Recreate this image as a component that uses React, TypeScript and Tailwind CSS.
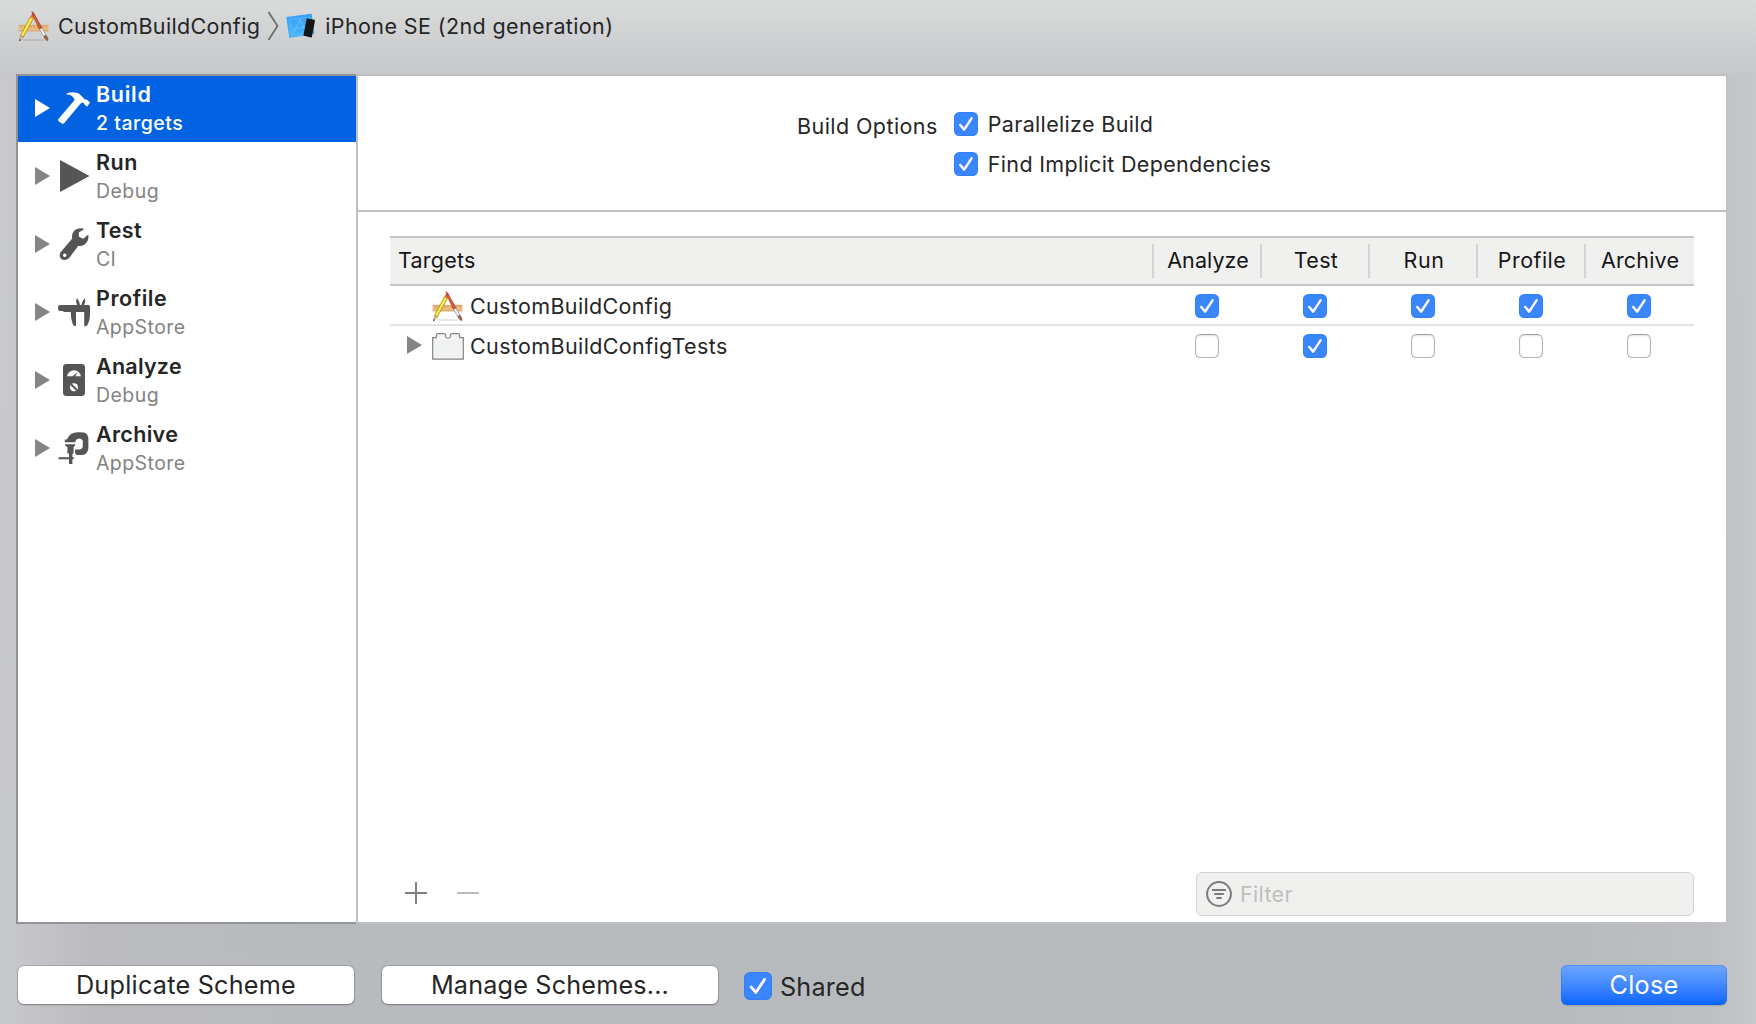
import type { ReactNode } from 'react'

function Disclosure({ className }: { className: string }) {
  return (
    <svg viewBox="0 0 15 18" className={`h-[18px] w-[15px] shrink-0 ${className}`} fill="currentColor">
      <path d="M0 0L15 9L0 18Z" />
    </svg>
  )
}

function Checkbox({ checked, large = false }: { checked: boolean; large?: boolean }) {
  const size = large ? 'size-7 rounded-[6px]' : 'size-6 rounded-[5.5px]'
  if (!checked) {
    return <span className={`block shrink-0 border border-[#b4b4b4] border-t-[#9f9f9f] bg-white shadow-[inset_0_1px_2px_rgba(0,0,0,0.12)] ${size}`} />
  }
  return (
    <span className={`block shrink-0 bg-[#3a87fd] shadow-[inset_0_0_0_1px_rgba(38,112,235,0.35)] ${size}`}>
      <svg viewBox="0 0 24 24" className="size-full" fill="none" strokeLinecap="round" strokeLinejoin="round" strokeWidth="2.5">
        <path d="M6.2 14L10.2 18.6L17.6 7.4" stroke="#2467cf" strokeOpacity=".45" />
        <path d="M6.2 13L10.2 17.6L17.6 6.4" stroke="#fff" />
      </svg>
    </span>
  )
}

function AppIcon() {
  return (
    <svg viewBox="0 0 31 31" className="size-[31px] shrink-0">
      <ellipse cx="16" cy="29" rx="12" ry="1" fill="#000" opacity=".1" />
      <path d="M.6 14H30.4V20.2H.6Z" fill="#ecbb84" />
      <path d="M.6 14.3H30.4M.6 19.9H30.4" stroke="#d39a62" strokeWidth=".7" />
      <path d="M4 15v2M7 15v2M10 15v2M13 15v2M16 15v2M19 15v2M25 15v2M28 15v2" stroke="#b98350" strokeWidth=".6" />
      <path d="M12.2 6L15.4 7.6L5.4 26L2.6 24.4Z" fill="#f2dd22" stroke="#8f7a25" strokeWidth=".6" />
      <path d="M13.4 7.2L3.9 25" stroke="#fff772" strokeWidth=".9" />
      <path d="M12.2 6L13.2 3.9C14.2 2.6 16.8 3.8 16.4 5.6L15.4 7.6Z" fill="#e9744a" />
      <path d="M2.6 24.4L5.4 26L1.4 30Z" fill="#edc48f" stroke="#705035" strokeWidth=".4" />
      <path d="M1.8 28.2L1.2 30.3L3 29Z" fill="#2c2a28" />
      <path d="M14 .4L15.8 2.2L24 17L21.6 18.4L14.8 4.4Z" fill="#c9431d" stroke="#8a3019" strokeWidth=".5" />
      <path d="M15.8 4.6L22.4 17" stroke="#f07a45" strokeWidth=".8" />
      <path d="M21.6 18.4L24 17L28 24.2L25.8 25.5Z" fill="#efeff1" stroke="#808085" strokeWidth=".6" />
      <path d="M25.8 25.5L28 24.2C29.6 26.2 30.2 27.8 29.9 29.6C28.1 29.3 26.6 27.6 25.8 25.5Z" fill="#a5643e" stroke="#69442f" strokeWidth=".5" />
    </svg>
  )
}

function SimulatorIcon() {
  return (
    <svg viewBox="0 0 30 26" className="h-[26px] w-[30px] shrink-0">
      <defs>
        <linearGradient id="paper" x1="0" y1="0" x2="0" y2="1">
          <stop offset="0" stopColor="#35a0f7" />
          <stop offset="1" stopColor="#49b4fb" />
        </linearGradient>
      </defs>
      <path d="M.3 4L25.6 .8L28.6 21L3.2 25Z" fill="url(#paper)" />
      <path d="M3.5 6.5L23.6 4L25 19.5L6 22.3Z" fill="none" stroke="#8ad0ff" strokeWidth=".5" opacity=".7" />
      <path d="M14.6 5.6L7.2 20.4M12.8 6L20 18M6.5 16L20 14.2" stroke="#8ad0ff" strokeWidth=".7" opacity=".8" />
      <path d="M21.5 5.4L28.4 6.8Q29.2 7 29 7.8L25.9 23.8Q25.7 24.6 25 24.4L18 22.7Q17.3 22.5 17.5 21.8L20.6 6Q20.8 5.2 21.5 5.4Z" fill="#161617" />
    </svg>
  )
}

function BundleIcon() {
  return (
    <svg viewBox="0 0 32 27" className="h-[27px] w-8 shrink-0" fill="#f1f2f2" stroke="#858585" strokeWidth="1.2">
      <path d="M.7 4.6H4.3V2.2Q4.3 .7 5.8 .7H12.2Q13.7 .7 13.7 2.2V4Q14.6 5.2 16 5.2Q17.4 5.2 18.3 4V2.2Q18.3 .7 19.8 .7H26.2Q27.7 .7 27.7 2.2V4.6H31.3V26.2H.7Z" />
      <path d="M4.8 5.4H13.2M18.8 5.4H27.2" stroke="#fff" strokeWidth="1" />
    </svg>
  )
}

function Glyph({ children }: { children: ReactNode }) {
  return (
    <svg viewBox="0 0 32 32" className="ml-2 size-8 shrink-0 overflow-visible" fill="currentColor">
      {children}
    </svg>
  )
}

const glyphs: Record<string, ReactNode> = {
  Build: (
    <path d="M8.6 1.6C13 -.4 19 -.1 22.3 2.7L26.2 6.8C27.2 7.8 28 7.9 28.8 7.6L32 10.4L29.3 14.6L26.6 13C26.6 11.4 25.4 10.9 24 10.6L22.2 12L6.3 31C5.4 32 4.4 31.9 3.4 31.2L.7 29.2C-.2 28.4 0 27.5 .6 26.8L16.6 8C15.6 4.4 12.6 2.4 8.6 2.4Z" />
  ),
  Run: <path d="M2 0L31.5 16L2 32Z" />,
  Test: (
    <path
      fillRule="evenodd"
      d="M26.4 1C19.5 -1.8 12.8 3.4 14.2 10.4L3.2 23.4C-.4 27.6 3 32.4 7.2 32C9.2 31.8 10.4 30.9 11.4 29.6L20.4 17.8C26.2 19 31.6 13.6 30.2 6.6L25.2 10.7L21 8.8L20.8 4.6ZM6.7 25.5A1.8 1.8 0 1 1 6.7 29.1A1.8 1.8 0 1 1 6.7 25.5Z"
    />
  ),
  Profile: (
    <path d="M2 9H19.3Q17.2 5.5 19 2Q21.6 5 22 9H23.3Q24 5 26.9 2Q28 5.6 26 9H30.5Q32 9 32 10.5V18Q31.9 26 28.6 30L26.2 30.2V16H18V30L15.8 29.8Q13 26 12.8 16H6L4.8 14.9H2Q0 14.9 0 12Q0 9 2 9Z" />
  ),
  Analyze: (
    <>
      <rect x="5" width="22" height="32" rx="3.4" />
      <path d="M9 12.2A7.1 7.1 0 0 1 23 12.2H17.4L19.3 8.4L14.5 12.2Z" fill="#fff" />
      <circle cx="16" cy="23.3" r="4" fill="#fff" />
      <path d="M13 20.3L19 26.3" stroke="currentColor" strokeWidth="2" />
    </>
  ),
  Archive: (
    <>
      <path d="M6.8 10.2V7.6H8.8Q12 0 20.2 .2L26 .5Q30.2 1.6 30.4 7V16Q30.2 21.4 25 23H18.8L17 20.9V17.6H21.2Q24.6 17.2 24.8 14V9.2Q24.4 6.6 21 6.5Q18.4 6.8 17.4 9V10.2Z" />
      <path d="M7 12.2H17.2V13.6L15.6 15V21.6H14.4V25.2H15.8V27.2H14.4V32H11V27.2H.5V25.2H11V21.6H9.4V15L7 13.6Z" />
    </>
  ),
}

const schemes = [
  { name: 'Build', sub: '2 targets', t: 'tracking-[0.7px]', s: 'tracking-[0.5px]' },
  { name: 'Run', sub: 'Debug', t: 'tracking-[0.5px]', s: 'tracking-[0.45px]' },
  { name: 'Test', sub: 'CI', t: 'tracking-[0.3px]', s: 'tracking-[0.3px]' },
  { name: 'Profile', sub: 'AppStore', t: 'tracking-[0.54px]', s: 'tracking-[0.42px]' },
  { name: 'Analyze', sub: 'Debug', t: 'tracking-[0.25px]', s: 'tracking-[0.45px]' },
  { name: 'Archive', sub: 'AppStore', t: 'tracking-[0.32px]', s: 'tracking-[0.42px]' },
]

const columns = [
  { name: 'Analyze', t: 'tracking-[0.07px]' },
  { name: 'Test', t: 'tracking-[0.31px]' },
  { name: 'Run', t: 'tracking-[0.6px]' },
  { name: 'Profile', t: 'tracking-[0.46px]' },
  { name: 'Archive', t: 'tracking-[0.18px]' },
]

function Checks({ values }: { values: boolean[] }) {
  return (
    <div className="ml-auto mr-0.5 flex">
      {values.map((v, i) => (
        <div key={i} className="flex w-[108px] justify-center pl-0.5">
          <Checkbox checked={v} />
        </div>
      ))}
    </div>
  )
}

function Sidebar() {
  return (
    <nav className="flex w-[340px] shrink-0 flex-col gap-0.5 border-2 border-r-0 border-[#929396] bg-white">
      {schemes.map(({ name, sub, t, s }, i) => (
        <div key={name} className={`flex h-[66px] pl-[17px] ${i === 0 ? 'bg-[#0163e2] text-white' : 'text-[#262626]'}`}>
          <div className={`flex items-center pb-0.5 ${i === 0 ? 'text-white' : 'text-[#555]'}`}>
            <Disclosure className={i === 0 ? 'text-white' : 'text-[#858585]'} />
            <Glyph>{glyphs[name]}</Glyph>
          </div>
          <div className="pl-1.5 pt-1">
            <div className={`font-semibold leading-7 ${t}`}>{name}</div>
            <div className={`text-[19.5px] leading-[30px] ${s} ${i === 0 ? 'font-medium text-white' : 'text-[#838383]'}`}>{sub}</div>
          </div>
        </div>
      ))}
    </nav>
  )
}

function Targets() {
  return (
    <section className="mx-8 mt-6 flex flex-col">
      <div className="flex h-[50px] border-y-2 border-[#c5c5c5] bg-[#f0f0ef] text-[#161616]">
        <div className="flex items-center pb-0.5 pl-2 tracking-[0.22px]">Targets</div>
        <div className="ml-auto mr-0.5 flex pt-1.5">
          {columns.map(({ name, t }) => (
            <div key={name} className={`flex h-[34px] w-[108px] items-center justify-center border-l-2 border-[#d3d3d4] pb-0.5 pl-0.5 ${t}`}>
              {name}
            </div>
          ))}
        </div>
      </div>
      <div className="flex h-10 items-center border-b-2 border-[#e3e3e3] pt-0.5">
        <div className="flex items-center pl-[42px]">
          <AppIcon />
          <span className="pl-[7px] leading-8 tracking-[0.35px]">CustomBuildConfig</span>
        </div>
        <Checks values={[true, true, true, true, true]} />
      </div>
      <div className="flex h-10 items-center">
        <div className="flex items-center pl-[17px]">
          <Disclosure className="mb-0.5 text-[#858585]" />
          <div className="pl-[10px]">
            <BundleIcon />
          </div>
          <span className="pl-1.5 leading-8 tracking-[0.37px]">CustomBuildConfigTests</span>
        </div>
        <Checks values={[false, true, false, false, false]} />
      </div>
    </section>
  )
}

export default function App() {
  return (
    <div className="flex h-[1024px] w-[1756px] flex-col overflow-hidden bg-[linear-gradient(to_right,#c8c9cc_0,rgba(190,189,193,0.7)_90px,rgba(183,186,190,0)_330px,rgba(183,186,190,0)_1560px,rgba(192,193,197,0.8)_1712px,#c6c7cb_100%),linear-gradient(to_bottom,#dadbdb_0,#c5c7c9_74px,#c0c2c5_40%,#b6babd_90%,#b8babe_100%)] bg-[size:100%_950px,100%_100%] bg-[position:0_74px,0_0] bg-no-repeat font-['Inter',sans-serif] text-[21.5px] text-[#262626]">
      <header className="flex h-[74px] shrink-0 pl-[18px]">
        <div className="flex h-[52px] items-center">
          <AppIcon />
          <span className="pl-[9px] tracking-[0.35px]">CustomBuildConfig</span>
          <svg viewBox="0 0 12 30" className="ml-[7px] h-[30px] w-3" fill="none" stroke="#707172" strokeWidth="1.9">
            <path d="M1.5 1L10.5 15L1.5 29" />
          </svg>
          <div className="pb-px pl-[7px]">
            <SimulatorIcon />
          </div>
          <span className="pl-[9px] tracking-[0.38px]">iPhone SE (2nd generation)</span>
        </div>
      </header>

      <main className="ml-4 flex h-[850px] w-[1711px] shrink-0">
        <Sidebar />
        <div className="flex flex-1 flex-col border-2 border-r-[1px] border-[#c0c0c2] bg-white">
          <div className="flex h-[136px] border-b-2 border-[#c0c0c0] pl-[439px] pt-9">
            <div className="pt-px leading-[26px] tracking-[0.43px]">Build Options</div>
            <div className="flex flex-col gap-4 pl-4">
              <label className="flex items-center leading-6 tracking-[0.33px]">
                <Checkbox checked />
                <span className="pl-2.5">Parallelize Build</span>
              </label>
              <label className="flex items-center leading-6 tracking-[0.33px]">
                <Checkbox checked />
                <span className="pl-2.5">Find Implicit Dependencies</span>
              </label>
            </div>
          </div>
          <Targets />
          <div className="mb-1.5 ml-[47px] mr-8 mt-auto flex h-11 items-center">
            <svg viewBox="0 0 22 22" className="-mt-0.5 size-[22px]" stroke="#808080" strokeWidth="2">
              <path d="M0 11H22M11 0V22" />
            </svg>
            <svg viewBox="0 0 22 22" className="-mt-0.5 ml-[30px] size-[22px]" stroke="#bcbcbc" strokeWidth="2">
              <path d="M0 11H22" />
            </svg>
            <div className="ml-auto flex h-11 w-[498px] items-center rounded-[6px] border-[1.5px] border-[#d2d2d3] bg-[#f0f0ef] pl-[9px] text-[#bebebe]">
              <svg viewBox="0 0 26 26" className="size-[26px]" fill="none" stroke="#7b7b7b" strokeWidth="2">
                <circle cx="13" cy="13" r="11.9" />
                <path d="M6 9H20M8.2 13H17.8M10.3 17H15.7" />
              </svg>
              <span className="pl-2 tracking-[0.34px]">Filter</span>
            </div>
          </div>
        </div>
      </main>

      <footer className="ml-[18px] mt-[41px] flex h-10 w-[1709px] shrink-0 items-center text-[25.2px]">
        <button className="h-[38px] w-[336px] rounded-[6px] bg-white leading-[38px] tracking-[0.25px] shadow-[0_0_0_1px_rgba(0,0,0,0.13),0_1px_2px_rgba(0,0,0,0.25)]">Duplicate Scheme</button>
        <button className="ml-7 h-[38px] w-[336px] rounded-[6px] bg-white leading-[38px] tracking-[0.18px] shadow-[0_0_0_1px_rgba(0,0,0,0.13),0_1px_2px_rgba(0,0,0,0.25)]">Manage Schemes...</button>
        <label className="ml-[26px] flex items-center pt-0.5 leading-[38px] tracking-[0.21px]">
          <Checkbox checked large />
          <span className="pl-2 pt-0.5">Shared</span>
        </label>
        <button className="ml-auto h-10 w-[166px] rounded-[6px] bg-linear-to-b from-[#6ea7ff] to-[#0564ff] leading-10 tracking-[0.28px] text-white shadow-[inset_0_0_0_1px_rgba(30,110,245,0.4),0_1px_1px_rgba(0,0,0,0.15)]">Close</button>
      </footer>
    </div>
  )
}
